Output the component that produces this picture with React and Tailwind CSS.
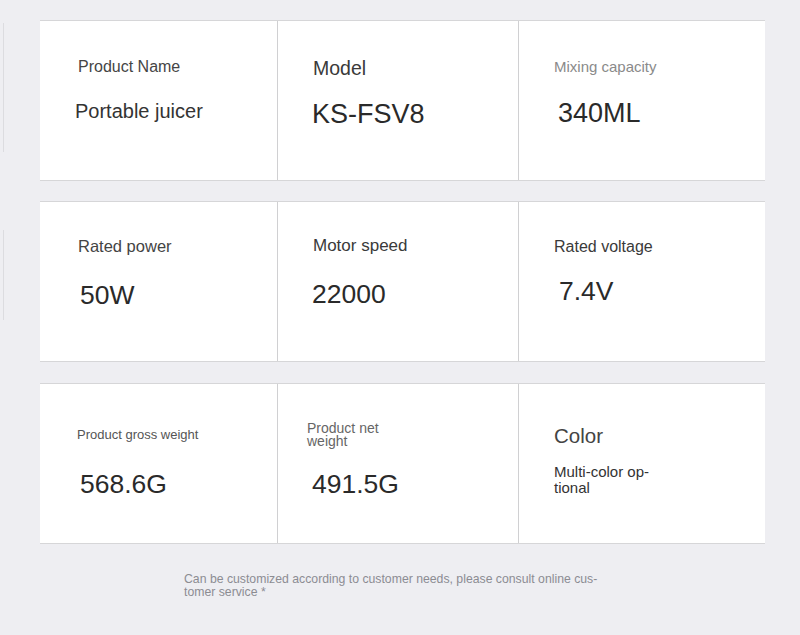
export default function App() {
  const font = { fontFamily: '"Liberation Sans", Arial, sans-serif' };
  return (
    <div className="relative w-[800px] h-[635px] bg-[#eeeef2] pt-[20px] pl-[40px] overflow-hidden" style={font}>
      <div className="absolute left-[3px] top-[23px] w-px h-[129px] bg-[#dcdce0]" />
      <div className="absolute left-[3px] top-[230px] w-px h-[90px] bg-[#dcdce0]" />

      {/* Row 1 */}
      <div className="flex w-[725px] h-[161px] bg-white border-t border-b border-[#d6d6d8]">
        <div className="w-[238px] h-full border-r border-[#d0d0d2] pt-[38px]">
          <div className="ml-[38px] text-[16px] leading-none text-[#454545] whitespace-nowrap">Product Name</div>
          <div className="ml-[35px] mt-[26px] text-[20px] leading-none text-[#333333] whitespace-nowrap">Portable juicer</div>
        </div>
        <div className="w-[241px] h-full border-r border-[#d0d0d2] pt-[38px]">
          <div className="ml-[35px] text-[19.5px] leading-none text-[#3a3a3a] whitespace-nowrap">Model</div>
          <div className="ml-[34px] mt-[22px] text-[27px] leading-none text-[#2a2a2a] whitespace-nowrap">KS-FSV8</div>
        </div>
        <div className="flex-1 h-full pt-[38px]">
          <div className="ml-[35px] text-[15px] leading-none text-[#8a8a8a] whitespace-nowrap">Mixing capacity</div>
          <div className="ml-[39px] mt-[26px] text-[27px] leading-none text-[#2a2a2a] whitespace-nowrap">340ML</div>
        </div>
      </div>

      {/* Row 2 */}
      <div className="flex w-[725px] h-[161px] mt-[20px] bg-white border-t border-b border-[#d6d6d8]">
        <div className="w-[238px] h-full border-r border-[#d0d0d2] pt-[36px]">
          <div className="ml-[38px] text-[16.5px] leading-none text-[#444444] whitespace-nowrap">Rated power</div>
          <div className="ml-[40px] mt-[27px] text-[26.5px] leading-none text-[#2a2a2a] whitespace-nowrap">50W</div>
        </div>
        <div className="w-[241px] h-full border-r border-[#d0d0d2] pt-[35px]">
          <div className="ml-[35px] text-[17px] leading-none text-[#3a3a3a] whitespace-nowrap">Motor speed</div>
          <div className="ml-[34px] mt-[27px] text-[26.5px] leading-none text-[#2a2a2a] whitespace-nowrap">22000</div>
        </div>
        <div className="flex-1 h-full pt-[37px]">
          <div className="ml-[35px] text-[16px] leading-none text-[#3a3a3a] whitespace-nowrap">Rated voltage</div>
          <div className="ml-[40px] mt-[23px] text-[26.5px] leading-none text-[#2a2a2a] whitespace-nowrap">7.4V</div>
        </div>
      </div>

      {/* Row 3 */}
      <div className="flex w-[725px] h-[161px] mt-[21px] bg-white border-t border-b border-[#d6d6d8]">
        <div className="w-[238px] h-full border-r border-[#d0d0d2] pt-[44px]">
          <div className="ml-[37px] text-[13px] leading-none text-[#555555] whitespace-nowrap">Product gross weight</div>
          <div className="ml-[40px] mt-[30px] text-[26.5px] leading-none text-[#2a2a2a] whitespace-nowrap">568.6G</div>
        </div>
        <div className="w-[241px] h-full border-r border-[#d0d0d2] pt-[38px]">
          <div className="ml-[29px] w-[90px] text-[14px] leading-[13px] text-[#666666]">Product net weight</div>
          <div className="ml-[34px] mt-[23px] text-[26.5px] leading-none text-[#2a2a2a] whitespace-nowrap">491.5G</div>
        </div>
        <div className="flex-1 h-full pt-[42px]">
          <div className="ml-[35px] text-[20.5px] leading-none text-[#444444] whitespace-nowrap">Color</div>
          <div className="ml-[35px] mt-[17px] text-[15px] leading-[16px] text-[#333333] whitespace-nowrap">
            Multi-color op-
            <br />
            tional
          </div>
        </div>
      </div>

      {/* Footer */}
      <div className="ml-[144px] mt-[29px] text-[12.25px] leading-[13px] text-[#8c8c92] whitespace-nowrap">
        Can be customized according to customer needs, please consult online cus-
        <br />
        tomer service *
      </div>
    </div>
  );
}
